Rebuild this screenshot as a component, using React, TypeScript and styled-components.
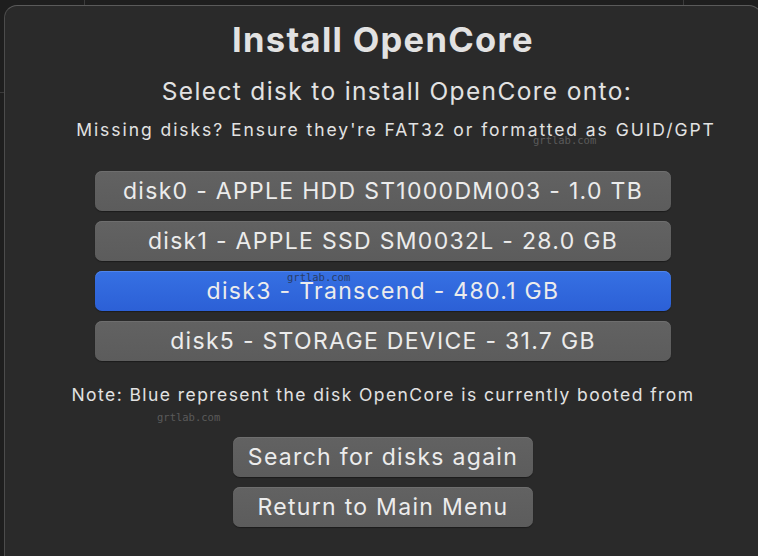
import React from "react";
import styled, { createGlobalStyle } from "styled-components";

const GlobalStyle = createGlobalStyle`
  html, body {
    margin: 0;
    padding: 0;
    width: 758px;
    height: 556px;
    overflow: hidden;
    background: #1e1e1e;
    font-family: Inter, "Noto Sans", "Liberation Sans", sans-serif;
    -webkit-font-smoothing: antialiased;
  }
`;

const Page = styled.div`
  position: relative;
  width: 758px;
  height: 556px;
  overflow: hidden;
  background:
    linear-gradient(#3a3a3a, #3a3a3a) 0 92px / 5px 1px no-repeat,
    #1e1e1e;
`;

// window frame peeking out behind the sheet
const BackFrame = styled.div`
  height: 5px;
  margin: 0 74px 0 84px;
  border-left: 1px solid #3c3c3c;
  border-right: 1px solid #3c3c3c;
`;

const Sheet = styled.div`
  margin-left: 4px;
  width: 758px;
  height: 580px;
  box-sizing: border-box;
  background: #2a2a2a;
  border: 1px solid #4c4c4c;
  border-top-color: #5a5a5a;
  border-radius: 13px;
  display: flex;
  flex-direction: column;
  align-items: center;
  padding-top: 14px;
`;

const Title = styled.h1`
  margin: 0;
  font-size: 34.5px;
  line-height: 40px;
  font-weight: 700;
  color: #e2e2e2;
  letter-spacing: 1.3px;
  white-space: nowrap;
`;

// labels are not perfectly centred in the original dialog
const Subtitle = styled.p`
  margin: 16px 0 0 28px;
  font-size: 24.5px;
  line-height: 30px;
  color: #e2e2e2;
  letter-spacing: 1.35px;
  white-space: nowrap;
`;

const Hint = styled.p<{ $top: number; $spacing: number; $shift?: number }>`
  margin: ${(p) => p.$top}px 0 0 ${(p) => p.$shift ?? 0}px;
  font-size: 17.5px;
  line-height: 22px;
  color: #e2e2e2;
  letter-spacing: ${(p) => p.$spacing}px;
  white-space: nowrap;
`;

const DiskList = styled.div`
  margin-top: 30px;
  width: 576px;
  display: flex;
  flex-direction: column;
  gap: 10px;
`;

const Button = styled.button<{ $blue?: boolean }>`
  height: 40px;
  width: 100%;
  box-sizing: border-box;
  border: none;
  border-radius: 7px;
  padding: 0;
  font-family: inherit;
  font-size: 23px;
  letter-spacing: 1.3px;
  white-space: nowrap;
  color: #ececec;
  background: ${(p) =>
    p.$blue
      ? "linear-gradient(#3670e3, #2c60d6)"
      : "linear-gradient(#626262, #5c5c5c)"};
  box-shadow: inset 0 1px 0 ${(p) => (p.$blue ? "#4f84ec" : "#6e6e6e")},
    0 1px 1px rgba(0, 0, 0, 0.35);
`;

const Actions = styled.div`
  margin-top: 31px;
  width: 300px;
  display: flex;
  flex-direction: column;
  gap: 10px;
`;

const Mark = styled.span<{ $x: number; $y: number; $dark?: boolean }>`
  position: absolute;
  left: ${(p) => p.$x}px;
  top: ${(p) => p.$y}px;
  font-family: "DejaVu Sans Mono", "Liberation Mono", monospace;
  font-size: 10.5px;
  line-height: 12px;
  color: ${(p) => (p.$dark ? "#2a3d66" : "#5a5a5a")};
  pointer-events: none;
`;

const disks = [
  { label: "disk0 - APPLE HDD ST1000DM003 - 1.0 TB" },
  { label: "disk1 - APPLE SSD SM0032L - 28.0 GB" },
  { label: "disk3 - Transcend - 480.1 GB", booted: true },
  { label: "disk5 - STORAGE DEVICE - 31.7 GB" },
];

export default function App() {
  return (
    <Page>
      <GlobalStyle />
      <BackFrame />
      <Sheet>
        <Title>Install OpenCore</Title>
        <Subtitle>Select disk to install OpenCore onto:</Subtitle>
        <Hint $top={13} $spacing={1.95} $shift={26}>
          Missing disks? Ensure they're FAT32 or formatted as GUID/GPT
        </Hint>
        <DiskList>
          {disks.map((d) => (
            <Button key={d.label} $blue={d.booted}>
              {d.label}
            </Button>
          ))}
        </DiskList>
        <Hint $top={23} $spacing={1.43}>
          Note: Blue represent the disk OpenCore is currently booted from
        </Hint>
        <Actions>
          <Button>Search for disks again</Button>
          <Button>Return to Main Menu</Button>
        </Actions>
      </Sheet>
      <Mark $x={533} $y={134}>grtlab.com</Mark>
      <Mark $x={287} $y={271} $dark>grtlab.com</Mark>
      <Mark $x={157} $y={411}>grtlab.com</Mark>
    </Page>
  );
}
